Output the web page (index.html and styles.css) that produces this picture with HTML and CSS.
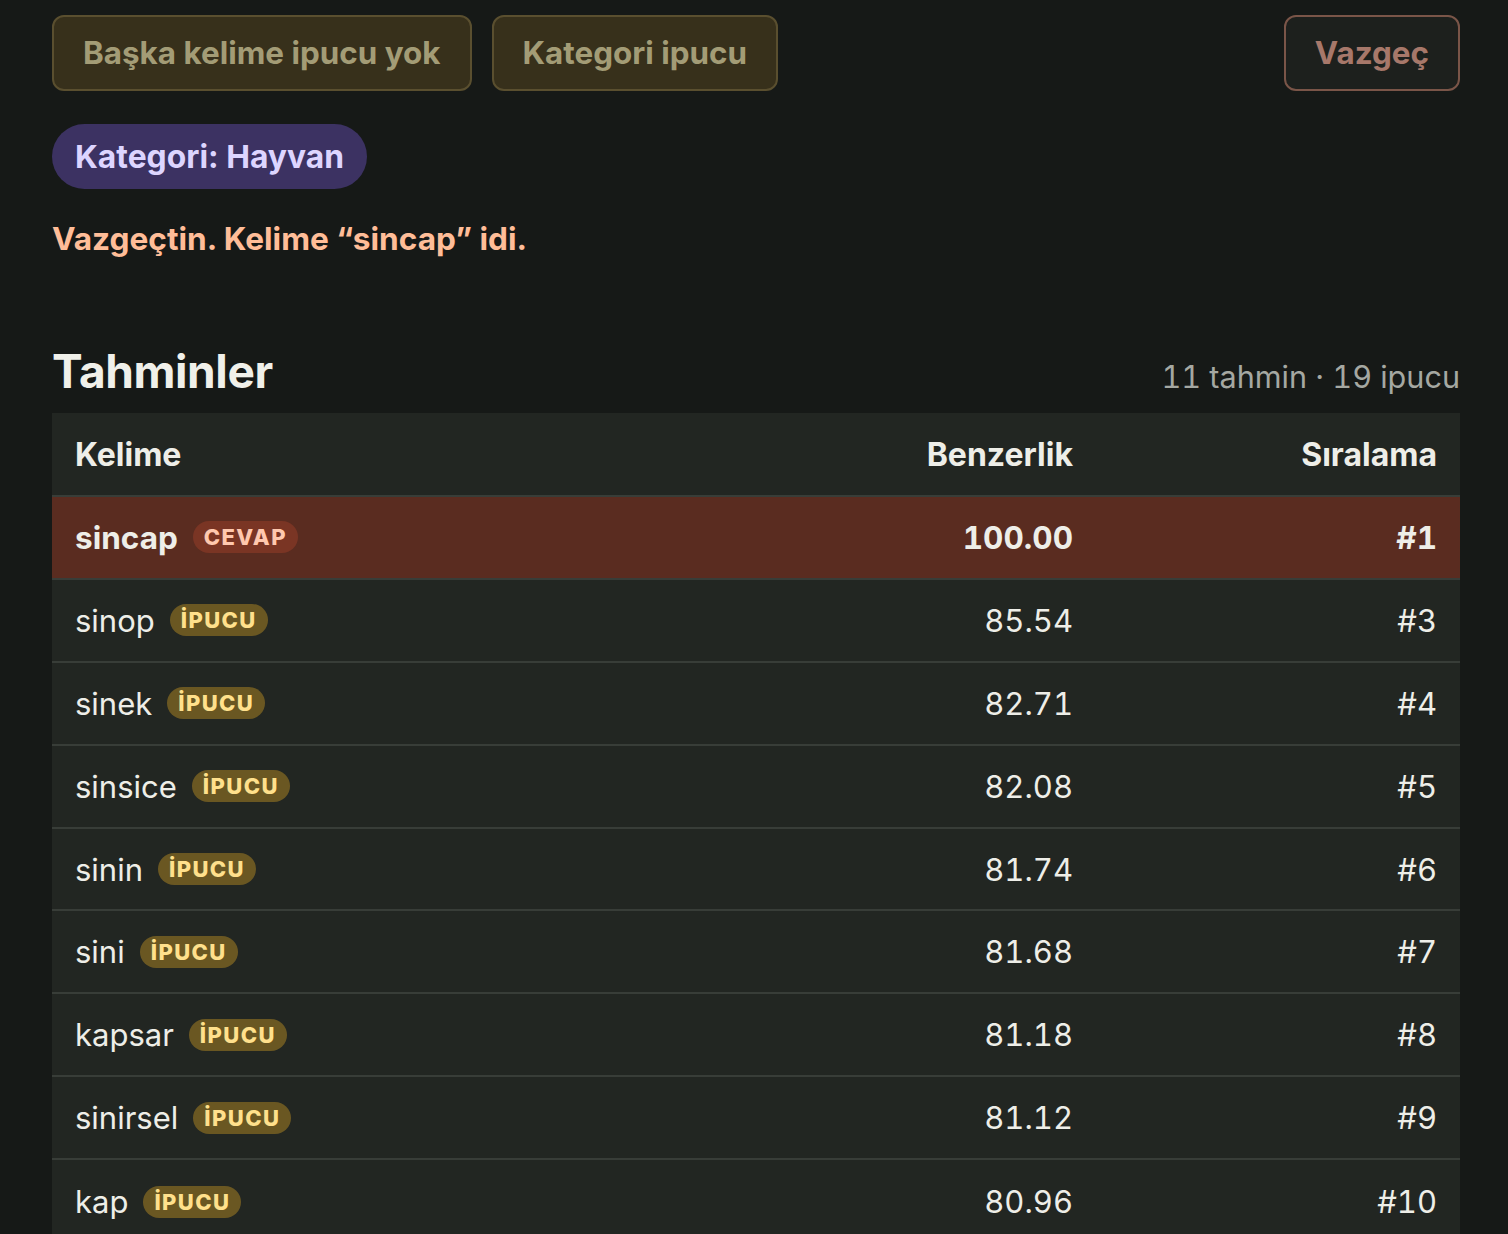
FILE: index.html
```html
<!DOCTYPE html>
<html lang="tr">
<head>
<meta charset="utf-8">
<title>Tahminler</title>
<link rel="stylesheet" href="styles.css">
</head>
<body>
<main class="page">
  <div class="actions">
    <div class="actions-left">
      <button class="btn btn-hint" disabled>Başka kelime ipucu yok</button>
      <button class="btn btn-hint">Kategori ipucu</button>
    </div>
    <button class="btn btn-giveup">Vazgeç</button>
  </div>

  <div class="category">Kategori: Hayvan</div>

  <p class="message">Vazgeçtin. Kelime “sincap” idi.</p>

  <section class="guesses">
    <div class="guesses-head">
      <h2 class="title">Tahminler</h2>
      <span class="stats">11 tahmin · 19 ipucu</span>
    </div>
    <div class="table">
      <div class="row row-header">
        <div class="cell">Kelime</div>
        <div class="cell num">Benzerlik</div>
        <div class="cell num">Sıralama</div>
      </div>
      <div class="row row-answer">
        <div class="cell word">sincap <span class="tag tag-answer">CEVAP</span></div>
        <div class="cell num">100.00</div>
        <div class="cell num">#1</div>
      </div>
      <div class="row">
        <div class="cell word">sinop <span class="tag tag-hint">İPUCU</span></div>
        <div class="cell num">85.54</div>
        <div class="cell num">#3</div>
      </div>
      <div class="row">
        <div class="cell word">sinek <span class="tag tag-hint">İPUCU</span></div>
        <div class="cell num">82.71</div>
        <div class="cell num">#4</div>
      </div>
      <div class="row">
        <div class="cell word">sinsice <span class="tag tag-hint">İPUCU</span></div>
        <div class="cell num">82.08</div>
        <div class="cell num">#5</div>
      </div>
      <div class="row">
        <div class="cell word">sinin <span class="tag tag-hint">İPUCU</span></div>
        <div class="cell num">81.74</div>
        <div class="cell num">#6</div>
      </div>
      <div class="row">
        <div class="cell word">sini <span class="tag tag-hint">İPUCU</span></div>
        <div class="cell num">81.68</div>
        <div class="cell num">#7</div>
      </div>
      <div class="row">
        <div class="cell word">kapsar <span class="tag tag-hint">İPUCU</span></div>
        <div class="cell num">81.18</div>
        <div class="cell num">#8</div>
      </div>
      <div class="row">
        <div class="cell word">sinirsel <span class="tag tag-hint">İPUCU</span></div>
        <div class="cell num">81.12</div>
        <div class="cell num">#9</div>
      </div>
      <div class="row">
        <div class="cell word">kap <span class="tag tag-hint">İPUCU</span></div>
        <div class="cell num">80.96</div>
        <div class="cell num">#10</div>
      </div>
    </div>
  </section>
</main>
</body>
</html>
```

FILE: styles.css
```css
* { box-sizing: border-box; }

html, body {
  margin: 0;
  padding: 0;
  background: #161917;
  color: #eeeee8;
  font-family: Inter, "Noto Sans", "DejaVu Sans", sans-serif;
}

.page {
  width: 1408px;
  margin: 0 0 0 52px;
  padding-top: 15px;
}

.actions {
  display: flex;
  justify-content: space-between;
  align-items: center;
}

.actions-left {
  display: flex;
  gap: 20px;
}

.btn {
  font-family: inherit;
  font-size: 31.4px;
  font-weight: 700;
  height: 76px;
  padding: 0 29px;
  border-radius: 12px;
  border: 2px solid;
  cursor: pointer;
}

.btn-hint {
  background: #37301b;
  border-color: #5a4f2f;
  color: #a39c76;
}

.btn-giveup {
  background: #1d201d;
  border-color: #7a5548;
  color: #a7786a;
}

.category {
  display: inline-flex;
  align-items: center;
  margin-top: 33px;
  height: 65px;
  padding: 0 23px;
  border-radius: 33px;
  background: #3c3262;
  color: #ddd5ff;
  font-size: 31.8px;
  font-weight: 700;
}

.message {
  margin: 30px 0 0;
  font-size: 31.6px;
  font-weight: 700;
  color: #ffbd98;
  line-height: 40px;
}

.guesses {
  margin-top: 84px;
}

.guesses-head {
  display: flex;
  justify-content: space-between;
  align-items: baseline;
  padding-bottom: 14px;
}

.title {
  margin: 0;
  font-size: 46px;
  font-weight: 700;
  letter-spacing: -0.4px;
  line-height: 56px;
  color: #f0f0ea;
}

.stats {
  font-size: 30.6px;
  color: #a5a8a2;
  font-feature-settings: "tnum";
}

.table {
  background: #222622;
}

.row {
  display: grid;
  grid-template-columns: 1fr 360px 364px;
  align-items: center;
  height: 82.9px;
  border-bottom: 2px solid #383d38;
  font-size: 31px;
}

.row:last-child { border-bottom: none; }

.row-header {
  height: 84px;
  font-weight: 700;
  font-size: 32px;
}

.row-answer {
  background: #5a2c20;
  font-weight: 700;
  font-size: 31.5px;
}

.cell {
  padding: 0 23px;
  white-space: nowrap;
}

.num {
  text-align: right;
  font-feature-settings: "tnum";
}

.word {
  display: flex;
  align-items: center;
  gap: 15px;
}

.tag {
  display: inline-flex;
  align-items: center;
  height: 32px;
  padding: 0 11px;
  border-radius: 16px;
  font-size: 22px;
  font-weight: 800;
  letter-spacing: 1.4px;
}

.tag-answer {
  background: #7a3524;
  color: #ffc8ae;
}

.tag-hint {
  background: #6a5722;
  color: #ffe08c;
}
```
